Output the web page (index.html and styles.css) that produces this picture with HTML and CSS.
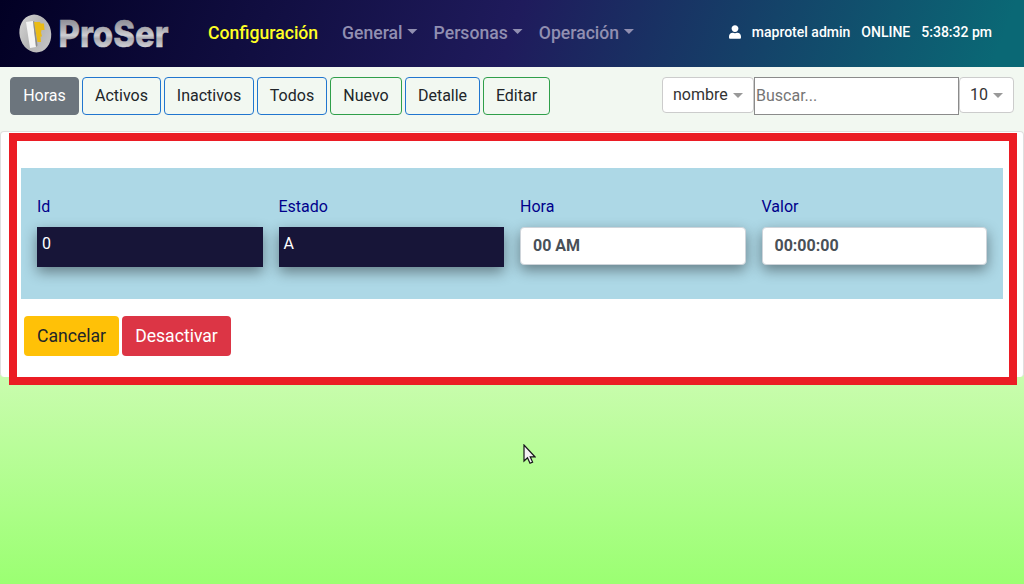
FILE: index.html
```html
<!DOCTYPE html>
<html lang="es">
<head>
<meta charset="utf-8">
<title>ProSer</title>
<link rel="stylesheet" href="styles.css">
</head>
<body>
<header class="navbar">
  <svg class="logo" width="160" height="46" viewBox="0 -2 160 46" role="img" aria-label="ProSer">
    <defs>
      <linearGradient id="metal" gradientUnits="userSpaceOnUse" x1="0" y1="6" x2="0" y2="34">
        <stop offset="0" stop-color="#8c8c94"/>
        <stop offset="0.4" stop-color="#b2b2b8"/>
        <stop offset="0.58" stop-color="#cfcfd3"/>
        <stop offset="0.7" stop-color="#a8a8af"/>
        <stop offset="1" stop-color="#d0d0d4"/>
      </linearGradient>
      <linearGradient id="coin" x1="0" y1="0" x2="1" y2="1">
        <stop offset="0" stop-color="#d8d8d8"/>
        <stop offset="0.5" stop-color="#b4b4b4"/>
        <stop offset="1" stop-color="#c9c9c9"/>
      </linearGradient>
    </defs>
    <ellipse cx="16.300" cy="20.500" rx="15.800" ry="19" transform="rotate(-12 16.300 20.500)" fill="url(#coin)"/>
    <path d="M7 9l7-1 3 26-6 1z" fill="#f4f4f4"/>
    <path d="M14 8l1.500.5 3 24-1.500 1.500z" fill="#8d8d8d"/>
    <path d="M15 9h6l.5 1.500H25l.5 6.500h-3l-.5 2.500 1 4h-1.500L22 29h-3.500z" fill="#eabb16"/>
    <text class="logo-text" x="39.500" y="33.500" textLength="110" lengthAdjust="spacingAndGlyphs" fill="url(#metal)" stroke="url(#metal)">ProSer</text>
  </svg>
  <nav class="menu">
    <a class="menu-title">Configuración</a>
    <a class="menu-item caret">General</a>
    <a class="menu-item caret">Personas</a>
    <a class="menu-item caret">Operación</a>
  </nav>
  <div class="session">
    <svg class="user-icon" width="12" height="14" viewBox="0 0 448 512"><path fill="#fff" d="M224 256c70.700 0 128-57.300 128-128S294.700 0 224 0 96 57.300 96 128s57.300 128 128 128zm89.600 32h-16.700c-22.200 10.200-46.900 16-72.900 16s-50.600-5.800-72.900-16h-16.700C60.200 288 0 348.200 0 422.400V464c0 26.500 21.500 48 48 48h352c26.500 0 48-21.500 48-48v-41.600c0-74.200-60.200-134.400-134.400-134.400z"/></svg>
    <span>maprotel admin</span><span>ONLINE</span><span>5:38:32 pm</span>
  </div>
</header>
<div class="toolbar">
  <div class="actions">
    <button class="btn btn-current">Horas</button>
    <button class="btn btn-blue w-activos">Activos</button>
    <button class="btn btn-blue w-inactivos">Inactivos</button>
    <button class="btn btn-blue w-todos">Todos</button>
    <button class="btn btn-green w-nuevo">Nuevo</button>
    <button class="btn btn-blue w-detalle">Detalle</button>
    <button class="btn btn-green w-editar">Editar</button>
  </div>
  <div class="search">
    <div class="select select-field caret">nombre</div>
    <input class="search-input" type="text" placeholder="Buscar...">
    <div class="select select-count caret">10</div>
  </div>
</div>
<main class="card">
  <section class="highlight">
    <div class="form">
      <div class="field"><label>Id</label><div class="value dark">0</div></div>
      <div class="field"><label>Estado</label><div class="value dark">A</div></div>
      <div class="field"><label>Hora</label><div class="value light">00 AM</div></div>
      <div class="field"><label>Valor</label><div class="value light">00:00:00</div></div>
    </div>
    <div class="form-actions">
      <button class="btn-lg cancel">Cancelar</button>
      <button class="btn-lg disable">Desactivar</button>
    </div>
  </section>
</main>
<svg class="cursor" width="13" height="21" viewBox="0 0 13 21"><path d="M1 1v16l3.500-3.300L7 19.200l2.600-1.100-2.400-5.300h4.700z" fill="#f4f0f4" stroke="#15151a" stroke-width="1.200"/></svg>
</body>
</html>
```

FILE: styles.css
```css
* { box-sizing: border-box; }
body {
  margin: 0;
  height: 584px;
  overflow: hidden;
  font: 16px/24px Roboto, sans-serif;
  color: #212529;
  background: linear-gradient(#f4f8f4 0, #f2f8f0 131px, #c9fcae 377px, #9bff72 584px);
}
button { font-family: inherit; margin: 0; white-space: nowrap; }
.navbar {
  display: flex;
  align-items: center;
  height: 67px;
  padding: 0 32px 0 19px;
  background: linear-gradient(110deg, #020024 0%, #1f1b5c 50%, #0a6875 97%);
}
.logo { flex: none; display: block; overflow: visible; }
.logo-text { font: 800 36.5px Inter, sans-serif; stroke-width: .5px; }
.menu { display: flex; margin: 0 0 2px 29px; font-size: 17.6px; font-weight: 500; }
.menu-title { color: #ffff24; width: 110px; margin-right: 24px; }
.menu-item { color: #918fb1; margin-right: 16px; }
.caret::after {
  content: "";
  display: inline-block;
  margin-left: 5px;
  vertical-align: 4px;
  border: 5px solid transparent;
  border-top-color: currentColor;
  border-bottom: 0;
}
.menu .caret::after {
  width: 10.6px;
  height: 5.3px;
  margin-left: 4.5px;
  vertical-align: 4.5px;
  border: 0;
  background: currentColor;
  clip-path: polygon(0 0, 100% 0, 50% 100%);
}
.session {
  display: flex;
  align-items: center;
  margin: 0 0 3px auto;
  gap: 11px;
  color: #fff;
  font-size: 14px;
  font-weight: 500;
  white-space: nowrap;
}
.toolbar { display: flex; justify-content: space-between; height: 64px; padding: 10px 10px 0; background: #f2f8f1; }
.actions { display: flex; gap: 3px; }
.btn {
  height: 38px;
  padding: 0;
  border: 1px solid;
  border-radius: 4px;
  font-size: 16px;
  line-height: 24px;
  color: #212529;
  background: transparent;
}
.btn-current { width: 69px; color: #fff; background: #6c757d; border-color: #6c757d; }
.btn-blue { border-color: #2176cf; }
.btn-green { border-color: #2f9f4a; }
.w-activos { width: 79px; }
.w-inactivos { width: 90px; }
.w-todos { width: 70px; }
.w-nuevo { width: 72px; }
.w-detalle { width: 75px; }
.w-editar { width: 67px; }
.search { display: flex; align-items: flex-start; }
.select {
  height: 36px;
  padding: 5px 10px;
  border: 1px solid #ccc;
  border-radius: 4px;
  background: #fff;
  color: #333;
  white-space: nowrap;
}
.select.caret::after { border-top-color: #999; vertical-align: 2px; }
.select-field { width: 92px; }
.select-count { width: 55px; }
.search-input {
  width: 205px;
  height: 38px;
  padding: 0 1px 2px;
  border: 1px solid #8b8b8b;
  border-radius: 0;
  background: #fff;
  font: inherit;
}
.search-input::placeholder { color: #757575; }
.card {
  height: 246px;
  padding: 1px 6px 0 8px;
  border: 1px solid #dfdfdf;
  border-bottom: 0;
  border-radius: 4px;
  background: #fff;
}
.highlight { height: 252px; padding: 27px 6px 0 4px; border: 8px solid #eb1c24; background: #fff; }
.form {
  display: grid;
  grid-template-columns: repeat(4, 1fr);
  gap: 16px;
  height: 131px;
  padding: 27px 16px 0;
  background: #add8e6;
}
.field label { display: block; height: 32px; color: #00008b; }
.value { box-shadow: 0 5px 14px rgba(0, 0, 0, .42); }
.dark { height: 40px; padding: 5px; background: #171538; color: #fff; }
.light { height: 38px; padding: 6px 12px; border: 1px solid #ced4da; border-radius: 4px; background: #fff; color: #495057; font-weight: 700; }
.form-actions { display: flex; gap: 3px; padding: 17px 3px; }
.btn-lg { height: 40px; padding: 0; border: 0; border-radius: 4px; font-size: 17.6px; }
.cancel { width: 95px; color: #212529; background: #ffc107; }
.disable { width: 109px; color: #fff; background: #dc3545; }
.cursor { position: absolute; left: 523px; top: 444px; }
```
